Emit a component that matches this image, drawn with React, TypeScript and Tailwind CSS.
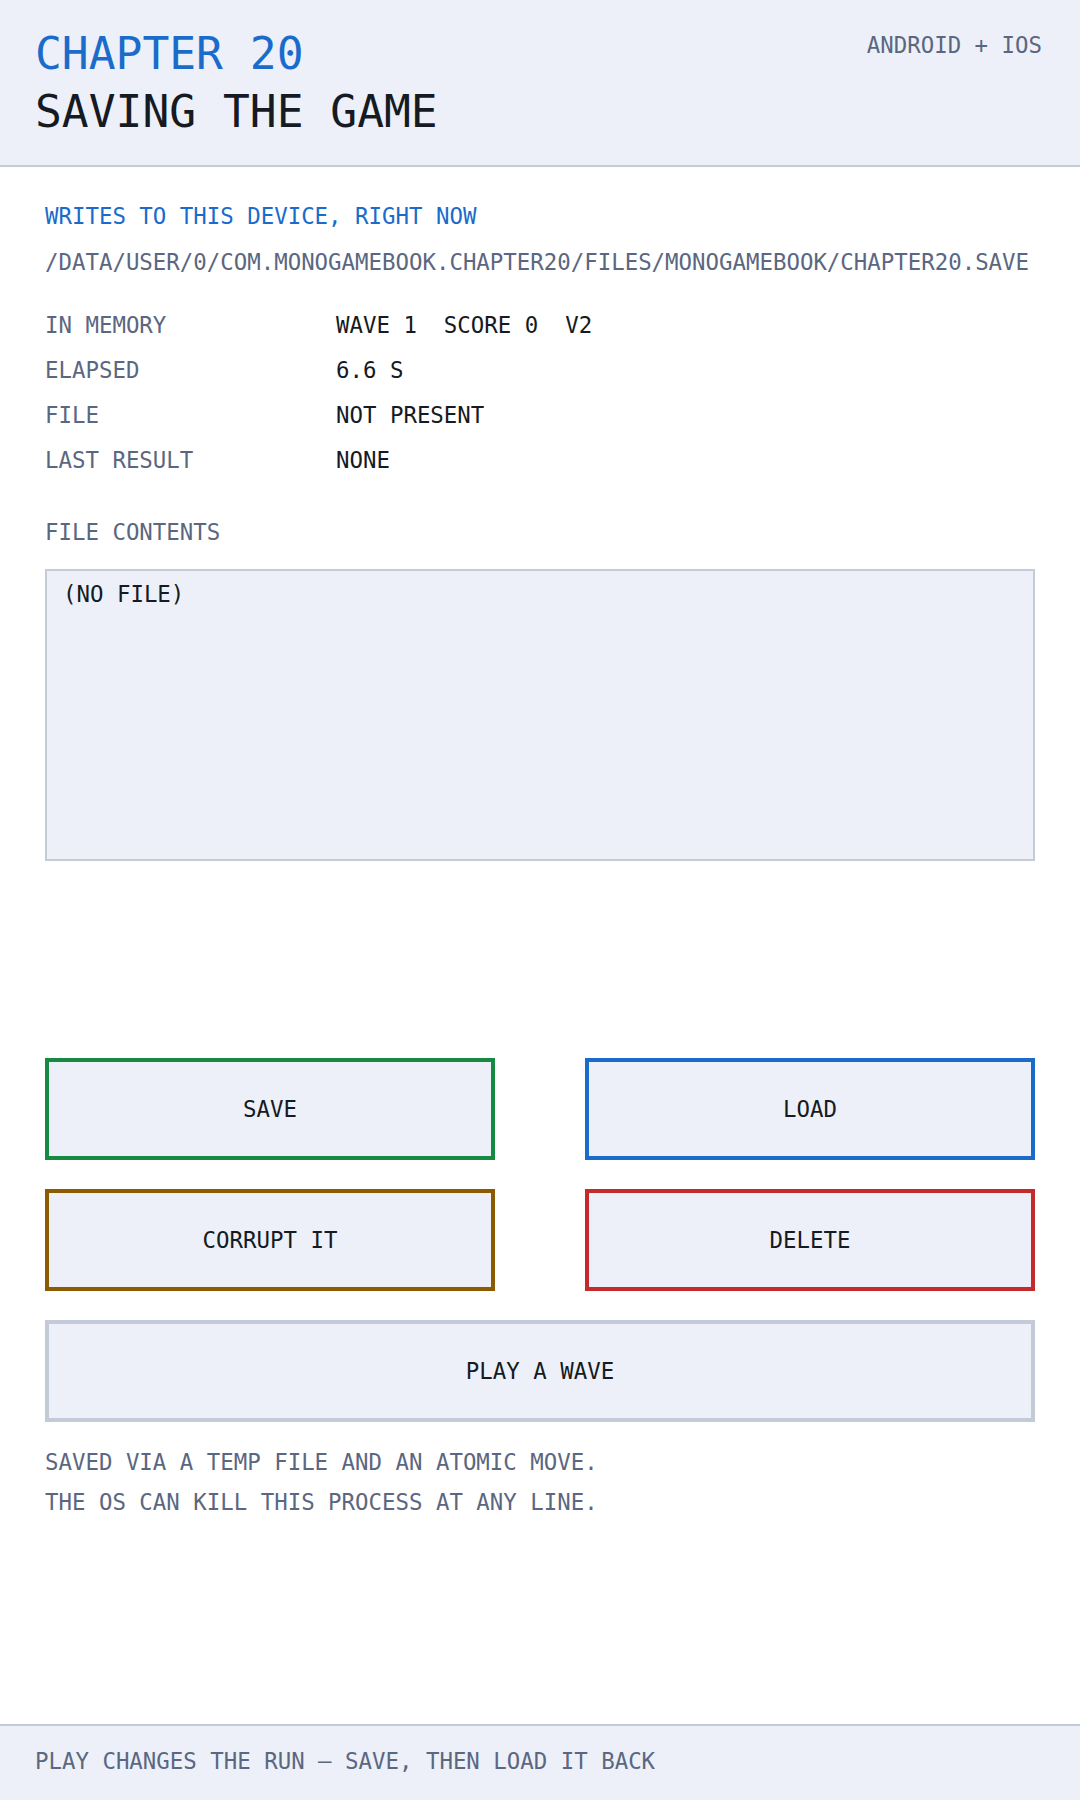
const mono = "font-['DejaVu_Sans_Mono','Liberation_Mono',monospace]";

const rows = [
  { label: "IN MEMORY", value: "WAVE 1  SCORE 0  V2" },
  { label: "ELAPSED", value: "6.6 S" },
  { label: "FILE", value: "NOT PRESENT" },
  { label: "LAST RESULT", value: "NONE" },
];

function ActionButton({ label, border }: { label: string; border: string }) {
  return (
    <button
      className={`flex h-[102px] w-full items-center justify-center border-4 bg-[#edf0f8] text-[22.4px] leading-[22px] text-[#151a23] ${border}`}
    >
      {label}
    </button>
  );
}

function App() {
  return (
    <div className={`flex h-[1800px] flex-col bg-white ${mono}`}>
      <header className="flex justify-between border-b-2 border-[#c3cbd9] bg-[#edf0f8] pb-[31px] pl-[35px] pr-[38px] pt-[33px]">
        <div>
          <h1 className="text-[44.6px] leading-[43px] text-[#1b6bcb]">CHAPTER 20</h1>
          <h2 className="mt-[15px] text-[44.6px] leading-[43px] text-[#151a23]">
            SAVING THE GAME
          </h2>
        </div>
        <span className="mt-[1px] text-[22.4px] leading-[22px] text-[#5b6781]">
          ANDROID + IOS
        </span>
      </header>

      <main className="flex flex-col px-[45px] pt-[38px] text-[22.4px] leading-[22px]">
        <p className="text-[#1b6bcb]">WRITES TO THIS DEVICE, RIGHT NOW</p>
        <p className="mt-[24px] whitespace-nowrap text-[#5b6781]">
          /DATA/USER/0/COM.MONOGAMEBOOK.CHAPTER20/FILES/MONOGAMEBOOK/CHAPTER20.SAVE
        </p>

        <div className="mt-[41px] flex flex-col gap-[23px]">
          {rows.map((r) => (
            <div key={r.label} className="flex">
              <span className="w-[291px] text-[#5b6781]">{r.label}</span>
              <span className="whitespace-pre text-[#151a23]">{r.value}</span>
            </div>
          ))}
        </div>

        <p className="mt-[50px] text-[#5b6781]">FILE CONTENTS</p>
        <div className="mt-[26px] h-[292px] border-2 border-[#c3cbd9] bg-[#edf0f8] px-[16px] pt-[12px] text-[#151a23]">
          (NO FILE)
        </div>

        <div className="mt-[197px] grid grid-cols-2 gap-x-[90px] gap-y-[29px]">
          <ActionButton label="SAVE" border="border-[#178a42]" />
          <ActionButton label="LOAD" border="border-[#1b6bcb]" />
          <ActionButton label="CORRUPT IT" border="border-[#8c5a00]" />
          <ActionButton label="DELETE" border="border-[#c4292c]" />
          <div className="col-span-2">
            <ActionButton label="PLAY A WAVE" border="border-[#c3cbd9]" />
          </div>
        </div>

        <p className="mt-[29px] text-[#5b6781]">
          SAVED VIA A TEMP FILE AND AN ATOMIC MOVE.
        </p>
        <p className="mt-[18px] text-[#5b6781]">
          THE OS CAN KILL THIS PROCESS AT ANY LINE.
        </p>
      </main>

      <footer className="mt-auto h-[76px] border-t-2 border-[#c3cbd9] bg-[#edf0f8] pl-[35px] pt-[24px] text-[22.4px] leading-[22px] text-[#5b6781]">
        PLAY CHANGES THE RUN — SAVE, THEN LOAD IT BACK
      </footer>
    </div>
  );
}

export default App;
